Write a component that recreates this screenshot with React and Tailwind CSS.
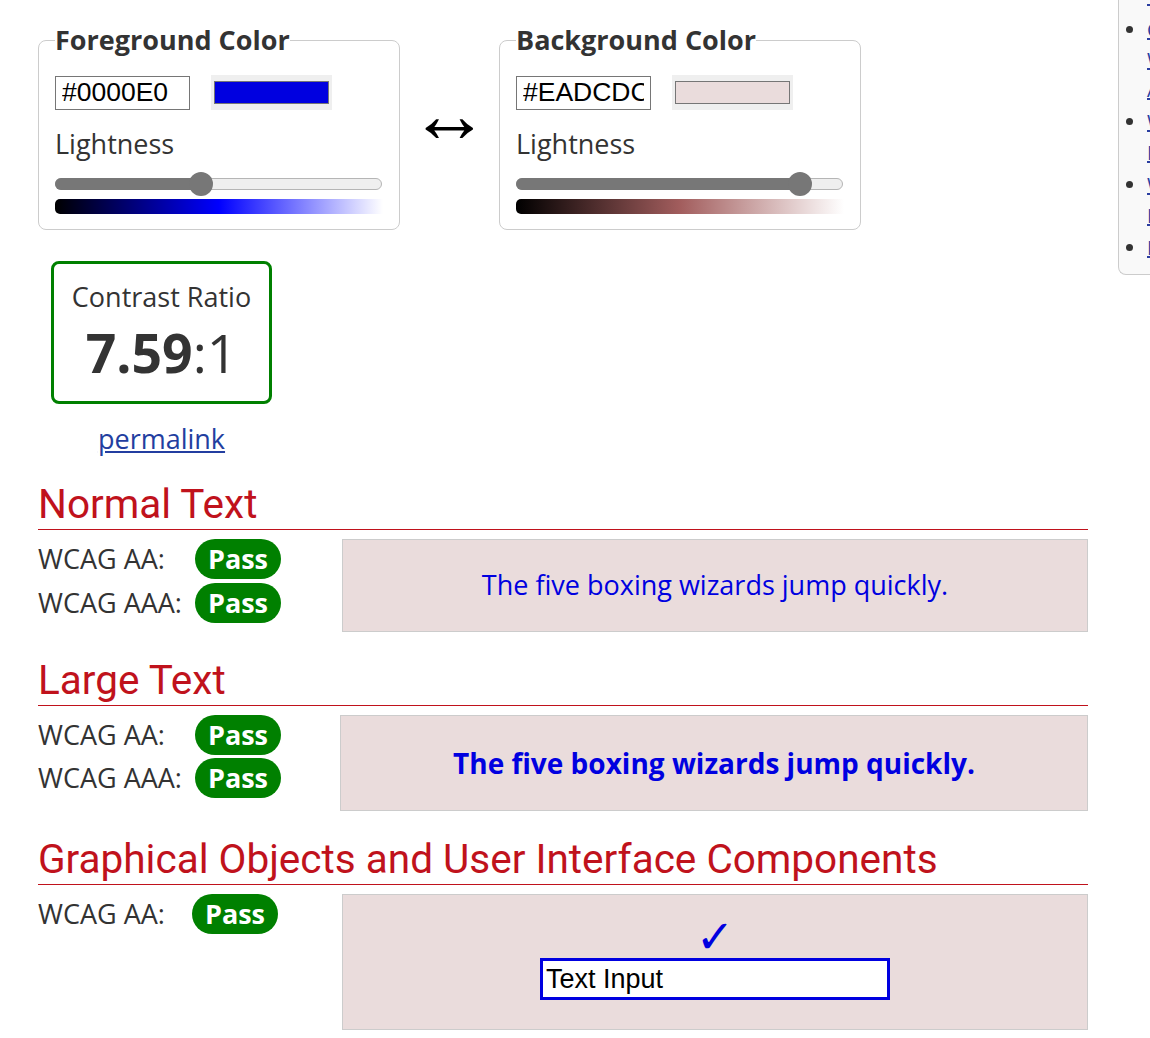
import React from 'react';

// Contrast checker: two colour pickers, the ratio, and the WCAG results
const sans = "font-['Open_Sans',sans-serif]";

function ColorPicker({ title, hex, swatch, fill, gradient }) {
  return (
    <fieldset className="w-[361px] rounded-lg border border-[#cccccc] px-4 pb-[15px]">
      <legend className="text-[27px] font-bold leading-[36px] text-[#333333]">{title}</legend>
      <div className="mt-[17px] flex items-center">
        <input
          readOnly
          value={hex}
          className="h-[34px] w-[135px] border border-[#767676] px-[6px] font-['Liberation_Sans',Arial,sans-serif] text-[26.5px] text-black outline-none"
        />
        <div className="ml-[21px] h-[35px] w-[121px] bg-[#efefef] px-[3px] py-[6px]">
          <div className="h-full w-full border border-[#767676]" style={{ background: swatch }} />
        </div>
      </div>
      <div className="mt-[16px] text-[27px] leading-[36px] text-[#333333]">Lightness</div>
      <div className="relative mt-[16px] h-[12px] w-[327px] rounded-full border border-[#b5b5b5] bg-[#efefef]">
        <div className="absolute -left-px -top-px h-[12px] rounded-full bg-[#777777]" style={{ width: fill }} />
        <div
          className="absolute -top-[7px] h-[24px] w-[24px] -translate-x-1/2 rounded-full bg-[#777777]"
          style={{ left: fill }}
        />
      </div>
      <div className="mt-[9px] h-[15px] w-[328px] rounded-l-[5px]" style={{ background: gradient }} />
    </fieldset>
  );
}

function Badge() {
  return (
    <span className="inline-flex h-[40px] w-[86px] items-center justify-center rounded-full bg-[#008000] text-[27px] font-bold text-white">
      Pass
    </span>
  );
}

function Heading({ children }) {
  return (
    <h2 className="border-b border-[#c0121c] pb-px font-['Roboto',sans-serif] text-[40.5px] leading-[48px] text-[#c0121c]">
      {children}
    </h2>
  );
}

function Row({ label, gap }) {
  return (
    <div className="flex h-[40px] items-center">
      <span className="text-[27px] text-[#333333]" style={{ width: gap }}>{label}</span>
      <Badge />
    </div>
  );
}

const sidebarItems = [
  ['Color contrast', 'WCAG', 'Accessibility'],
  ['Web accessibility', 'Evaluation tools'],
  ['Writing for web', 'Design tips'],
  ['Developing'],
];

export default function App() {
  return (
    <div className={`flex h-[1038px] w-[1150px] overflow-hidden bg-white ${sans}`}>
      <main className="w-[1088px] shrink-0 pl-[38px] pt-[22px]">
        <div className="flex items-center">
          <ColorPicker
            title="Foreground Color"
            hex="#0000E0"
            swatch="#0000e0"
            fill="145px"
            gradient="linear-gradient(to right, #000000, #0000ff 50%, #ffffff)"
          />
          <div className="-mt-[22px] w-[99px] text-center font-['Liberation_Sans',Arial,sans-serif] text-[80px] leading-[60px] text-black">↔</div>
          <ColorPicker
            title="Background Color"
            hex="#EADCDC"
            swatch="#eadcdc"
            fill="283px"
            gradient="linear-gradient(to right, #000000, #a25d5d 50%, #ffffff)"
          />
        </div>

        <div className="ml-[13px] mt-[31px] w-[221px]">
          <div className="flex h-[143px] flex-col items-center rounded-lg border-[3px] border-[#008000] text-[#333333]">
            <div className="mt-[15px] text-[27px] leading-[36px]">Contrast Ratio</div>
            <div className="mt-[6px] text-[53.5px] leading-[64px]">
              <span className="font-bold">7.59</span>:1
            </div>
          </div>
          <a href="#" className="mt-[17px] block text-center text-[27px] leading-[36px] text-[#233ea0] underline">
            permalink
          </a>
        </div>

        <section className="mt-[23px]">
          <Heading>Normal Text</Heading>
          <div className="mt-[9px] flex">
            <div className="flex w-[304px] flex-col gap-[4px]">
              <Row label="WCAG AA:" gap="157px" />
              <Row label="WCAG AAA:" gap="157px" />
            </div>
            <div className="flex h-[93px] flex-1 items-center justify-center border border-[#cccccc] bg-[#eadcdc] text-[27px] text-[#0000e0]">
              The five boxing wizards jump quickly.
            </div>
          </div>
        </section>

        <section className="mt-[24px]">
          <Heading>Large Text</Heading>
          <div className="mt-[9px] flex">
            <div className="flex w-[302px] flex-col gap-[3px]">
              <Row label="WCAG AA:" gap="157px" />
              <Row label="WCAG AAA:" gap="157px" />
            </div>
            <div className="flex h-[96px] flex-1 items-center justify-center border border-[#cccccc] bg-[#eadcdc] text-[28px] font-bold text-[#0000e0]">
              The five boxing wizards jump quickly.
            </div>
          </div>
        </section>

        <section className="mt-[24px]">
          <Heading>Graphical Objects and User Interface Components</Heading>
          <div className="mt-[9px] flex">
            <div className="w-[304px]">
              <Row label="WCAG AA:" gap="154px" />
            </div>
            <div className="flex h-[136px] flex-1 flex-col items-center border border-[#cccccc] bg-[#eadcdc]">
              <div className="mt-[21px] font-['DejaVu_Sans',sans-serif] text-[46px] leading-[42px] text-[#0000e0]">✓</div>
              <input
                readOnly
                value="Text Input"
                className="h-[42px] w-[350px] border-[3px] border-[#0000e0] bg-white px-[3px] font-['Liberation_Sans',Arial,sans-serif] text-[27px] text-black outline-none"
              />
            </div>
          </div>
        </section>
      </main>

      <aside className="ml-[30px] h-[275px] w-[300px] shrink-0 self-start rounded-bl-lg border-b border-l border-[#cccccc] bg-[#f9f9f9]">
        <div className="-mt-[20px] pl-[28px] text-[20px] leading-[31px]">
          <div className="text-[#2a3ea0] underline">Tools</div>
          {sidebarItems.map((lines, i) => (
            <ul key={i} className={`list-disc text-[#333333] ${i === 0 ? 'mt-[4px] leading-[30px]' : 'mt-[1px]'}`}>
              <li>
                {lines.map((l) => (
                  <a key={l} href="#" className="block text-[#2a3ea0] underline">{l}</a>
                ))}
              </li>
            </ul>
          ))}
        </div>
      </aside>
    </div>
  );
}
